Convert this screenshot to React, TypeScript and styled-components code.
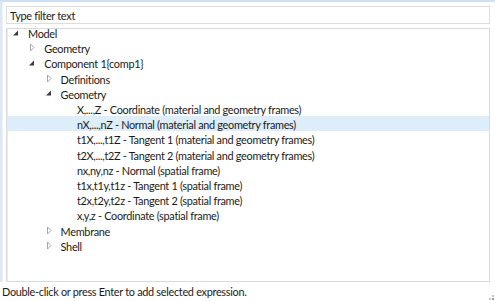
import styled, { createGlobalStyle } from "styled-components";

const GlobalStyle = createGlobalStyle`
  html, body {
    margin: 0;
    padding: 0;
    background: #ffffff;
  }
  body {
    font-family: Lato, "Open Sans", sans-serif;
    font-size: 10.9px;
    letter-spacing: -0.3px;
    color: #1b1b1b;
  }
`;

const Dialog = styled.div`
  width: 495px;
  height: 301px;
  overflow: hidden;
  display: grid;
  grid-template-rows: 1fr 19px;
  border-top: 2px solid #cddff2;
  box-sizing: border-box;
`;

const Upper = styled.div`
  display: flex;
  min-height: 0;
`;

const SideStrip = styled.div`
  width: 2px;
  background: #dde8f6;
  border-right: 1px solid #eef2f7;
`;

const Content = styled.div`
  flex: 1;
  display: flex;
  flex-direction: column;
  gap: 4px;
  padding: 4px 5px 0 3px;
  min-height: 0;
`;

const FilterInput = styled.input`
  height: 18px;
  box-sizing: border-box;
  border: 1px solid #dcdcdc;
  padding: 0 3px;
  font: inherit;
  letter-spacing: inherit;
  color: #1b1b1b;
  outline: none;
  &::placeholder {
    color: #1b1b1b;
  }
`;

const TreePanel = styled.div`
  flex: 1;
  border: 1px solid #dadada;
  box-shadow: inset 1px 0 0 #ececec;
  overflow: hidden;
`;

const TreeList = styled.ul`
  list-style: none;
  margin: -4px 0 0 0;
  padding: 0;
`;

const Row = styled.li<{ $level: number; $selected?: boolean }>`
  display: flex;
  align-items: center;
  height: 15.2px;
  padding-left: ${(p) => 5 + p.$level * 16.3}px;
  background: ${(p) => (p.$selected ? "#ddedfa" : "transparent")};
  white-space: nowrap;
`;

const Toggle = styled.span`
  width: 16px;
  flex: none;
  display: flex;
  align-items: center;
`;

const Label = styled.span`
  line-height: 15px;
  position: relative;
  top: 1px;
`;

const Status = styled.div`
  padding-left: 2px;
  line-height: 20px;
  position: relative;
`;

const Grip = styled.svg`
  position: absolute;
  right: 1px;
  bottom: 1px;
`;

type Node = {
  label: string;
  level: number;
  state?: "open" | "closed";
  selected?: boolean;
};

const nodes: Node[] = [
  { label: "Model", level: 0, state: "open" },
  { label: "Geometry", level: 1, state: "closed" },
  { label: "Component 1{comp1}", level: 1, state: "open" },
  { label: "Definitions", level: 2, state: "closed" },
  { label: "Geometry", level: 2, state: "open" },
  { label: "X,...,Z - Coordinate (material and geometry frames)", level: 3 },
  { label: "nX,...,nZ - Normal (material and geometry frames)", level: 3, selected: true },
  { label: "t1X,...,t1Z - Tangent 1 (material and geometry frames)", level: 3 },
  { label: "t2X,...,t2Z - Tangent 2 (material and geometry frames)", level: 3 },
  { label: "nx,ny,nz - Normal (spatial frame)", level: 3 },
  { label: "t1x,t1y,t1z - Tangent 1 (spatial frame)", level: 3 },
  { label: "t2x,t2y,t2z - Tangent 2 (spatial frame)", level: 3 },
  { label: "x,y,z - Coordinate (spatial frame)", level: 3 },
  { label: "Membrane", level: 2, state: "closed" },
  { label: "Shell", level: 2, state: "closed" },
];

const Expander = ({ state }: { state?: "open" | "closed" }) => {
  if (state === "open")
    return (
      <svg width="8" height="8" viewBox="0 0 8 8">
        <path d="M6 1.5 L6 6.5 L1 6.5 Z" fill="#3c3c3c" />
      </svg>
    );
  if (state === "closed")
    return (
      <svg width="8" height="9" viewBox="0 0 8 9">
        <path d="M2.5 1 L6 4.5 L2.5 8 Z" fill="none" stroke="#a6a6a6" strokeWidth="1" />
      </svg>
    );
  return null;
};

export default function App() {
  return (
    <>
      <GlobalStyle />
      <Dialog>
        <Upper>
          <SideStrip />
          <Content>
            <FilterInput placeholder="Type filter text" />
            <TreePanel>
              <TreeList>
                {nodes.map((n, i) => (
                  <Row key={i} $level={n.level} $selected={n.selected}>
                    <Toggle>{n.state && <Expander state={n.state} />}</Toggle>
                    <Label>{n.label}</Label>
                  </Row>
                ))}
              </TreeList>
            </TreePanel>
          </Content>
        </Upper>
        <Status>
          Double-click or press Enter to add selected expression.
          <Grip width="5" height="5" viewBox="0 0 5 5">
            <rect x="3" y="3" width="2" height="2" fill="#9a9a9a" />
            <rect x="0" y="3" width="2" height="2" fill="#c4c4c4" />
            <rect x="3" y="0" width="2" height="2" fill="#c4c4c4" />
          </Grip>
        </Status>
      </Dialog>
    </>
  );
}
